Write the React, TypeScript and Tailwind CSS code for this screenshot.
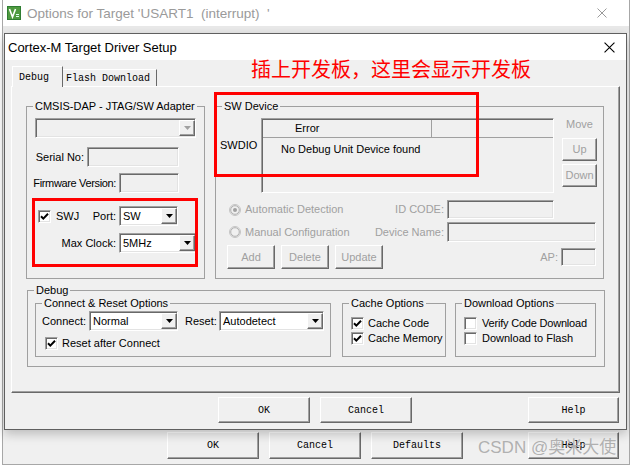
import type { ReactNode } from 'react'

const sunken =
  'border border-t-[#a0a0a0] border-l-[#a0a0a0] border-b-white border-r-white shadow-[inset_1px_1px_0_#696969,inset_-1px_-1px_0_#e3e3e3]'
const raised =
  'border border-t-white border-l-white border-b-[#696969] border-r-[#696969] shadow-[inset_-1px_-1px_0_#a0a0a0]'
const mono = "font-['Liberation_Mono',monospace] text-[10px] text-black"

function Btn({ children, className = '', disabled }: { children: ReactNode; className?: string; disabled?: boolean }) {
  return (
    <div
      className={`flex items-center justify-center bg-[#f0f0f0] ${raised} ${disabled ? 'text-[#a0a0a0]' : ''} ${className}`}
    >
      {children}
    </div>
  )
}

function Arrow({ disabled }: { disabled?: boolean }) {
  return (
    <div className={`ml-auto w-[16px] h-[16px] flex items-center justify-center bg-[#f0f0f0] ${raised}`}>
      <svg width="7" height="4" viewBox="0 0 7 4">
        <path d="M0 0H7L3.5 4Z" fill={disabled ? '#a0a0a0' : '#000'} />
      </svg>
    </div>
  )
}

function Combo({ value, className = '', disabled }: { value?: string; className?: string; disabled?: boolean }) {
  return (
    <div className={`h-[20px] flex items-center ${disabled ? 'bg-[#f0f0f0]' : 'bg-white'} ${sunken} ${className}`}>
      <span className="pl-[3px]">{value}</span>
      <Arrow disabled={disabled} />
    </div>
  )
}

function Field({ className = '' }: { className?: string }) {
  return <div className={`bg-[#f0f0f0] ${sunken} ${className}`} />
}

function Check({ checked, className = '' }: { checked?: boolean; className?: string }) {
  return (
    <div className={`w-[13px] h-[13px] shrink-0 bg-white flex items-center justify-center ${sunken} ${className}`}>
      {checked && (
        <svg width="9" height="9" viewBox="0 0 9 9">
          <path d="M1 4.3L3.3 6.6L8 1.8" stroke="#000" strokeWidth="2" fill="none" />
        </svg>
      )}
    </div>
  )
}

function Radio({ checked, className = '' }: { checked?: boolean; className?: string }) {
  return (
    <svg width="12" height="12" viewBox="0 0 12 12" className={className}>
      <circle cx="6" cy="6" r="5.5" fill="#f0f0f0" stroke="#c4c4c4" />
      <circle cx="6" cy="6" r="4.3" fill="#f0f0f0" stroke="#a0a0a0" strokeWidth="0.8" />
      {checked && <circle cx="6" cy="6" r="2" fill="#a0a0a0" />}
    </svg>
  )
}

function Group({ title, className = '', children }: { title: string; className?: string; children?: ReactNode }) {
  return (
    <fieldset className={`border border-[#a0a0a0] ${className}`}>
      <legend className="ml-[6px] px-[2px] leading-[13px]">{title}</legend>
      {children}
    </fieldset>
  )
}

function XIcon({ color, size, className = '' }: { color: string; size: number; className?: string }) {
  return (
    <svg width={size} height={size} viewBox="0 0 10 10" className={className}>
      <path d="M0.5 0.5L9.5 9.5M9.5 0.5L0.5 9.5" stroke={color} strokeWidth="1" />
    </svg>
  )
}

function KeilIcon() {
  return (
    <svg width="14" height="14" viewBox="0 0 14 14">
      <rect x="0" y="0" width="14" height="14" fill="#2f7d32" />
      <rect x="1" y="1" width="12" height="12" fill="#4f9a3f" />
      <path d="M2.5 3L5.5 11L8.5 3" stroke="#fff" strokeWidth="1.6" fill="none" />
      <path d="M9 8.5H12M9 10.5H12" stroke="#dfe" strokeWidth="1" />
    </svg>
  )
}

export default function App() {
  return (
    <div className="relative w-[630px] h-[467px] overflow-hidden bg-white text-[11px] leading-[13px] text-black font-['Liberation_Sans',Arial,sans-serif]">
      {/* background window */}
      <div className="ml-[2px] w-[628px] h-[465px] flex flex-col border-x border-b border-[#a7a7a7] bg-[#f0f0f0]">
        <div className="h-[26px] shrink-0 bg-white flex items-center pl-[4px] pr-[22px]">
          <KeilIcon />
          <span className="ml-[6px] text-[13.5px] text-[#9a9a9a] whitespace-pre">
            {"Options for Target 'USART1  (interrupt)  '"}
          </span>
          <XIcon color="#9a9a9a" size={10} className="ml-auto" />
        </div>
        <div className="h-[7px] shrink-0 bg-[#e9e9e9]" />
        <div className="flex-1" />
        <div className={`flex pl-[164px] pb-[5px] ${mono}`}>
          <Btn className="w-[92px] h-[27px]">OK</Btn>
          <Btn className="w-[92px] h-[27px] ml-[10px]">Cancel</Btn>
          <Btn className="w-[92px] h-[27px] ml-[10px]">Defaults</Btn>
          <Btn className="w-[91px] h-[27px] ml-[65px]">Help</Btn>
        </div>
      </div>

      {/* driver setup dialog */}
      <div className="absolute left-[4px] top-[33px] w-[623px] h-[397px] flex flex-col border border-[#5f5f5f] bg-[#f0f0f0] shadow-[0_4px_10px_rgba(0,0,0,0.22)]">
        <div className="h-[26px] shrink-0 bg-white flex items-center pl-[3px] pr-[11px]">
          <span className="text-[13px]">Cortex-M Target Driver Setup</span>
          <XIcon color="#000" size={11} className="ml-auto" />
        </div>
        <div className="pt-[6px] pl-[6px]">
          <div className={`flex items-end h-[20px] pl-[1px] ${mono}`}>
            <div className="relative z-10 w-[51px] h-[21px] -mb-[1px] pl-[6px] pt-[4px] bg-[#f0f0f0] border-t border-l border-white border-r border-r-[#696969]">
              Debug
            </div>
            <div className="w-[94px] h-[17px] pl-[3px] pt-[2px] border-t border-white border-r border-r-[#696969]">
              Flash Download
            </div>
          </div>
          <div className={`w-[609px] h-[307px] ${raised}`}>
            <div className="flex pl-[14px] pt-[13px] gap-[10px]">
              <Group title="CMSIS-DAP - JTAG/SW Adapter" className="w-[179px] h-[179px]">
                <Combo disabled className="ml-[8px] mt-[5px] w-[161px]" />
                <div className="flex items-center mt-[9px]">
                  <span className="w-[57px] text-right">Serial No:</span>
                  <Field className="ml-[3px] w-[92px] h-[20px]" />
                </div>
                <div className="flex items-center mt-[6px]">
                  <span className="w-[89px] text-right whitespace-nowrap tracking-[-0.35px]">Firmware Version:</span>
                  <Field className="ml-[3px] w-[60px] h-[20px]" />
                </div>
                <div className="flex items-center mt-[13px]">
                  <div className="w-[89px] flex items-center">
                    <Check checked className="ml-[11px]" />
                    <span className="ml-[5px]">SWJ</span>
                    <span className="ml-auto">Port:</span>
                  </div>
                  <Combo value="SW" className="ml-[3px] w-[59px]" />
                </div>
                <div className="flex items-center mt-[7px]">
                  <span className="w-[89px] text-right">Max Clock:</span>
                  <Combo value="5MHz" className="ml-[3px] w-[77px]" />
                </div>
              </Group>

              <Group title="SW Device" className="w-[389px] h-[179px]">
                <div className="flex mt-[5px]">
                  <span className="w-[45px] pl-[4px] pt-[21px]">SWDIO</span>
                  <div className="w-[293px] h-[75px] border border-t-[#a0a0a0] border-l-[#a0a0a0] border-b-white border-r-white shadow-[inset_1px_1px_0_#696969]">
                    <div className="flex h-[18px] ml-[1px] mt-[1px] border-b border-[#a0a0a0]">
                      <div className="w-[169px] pl-[32px] leading-[17px] border-r border-[#a0a0a0]">Error</div>
                    </div>
                    <div className="pl-[19px] pt-[5px]">No Debug Unit Device found</div>
                  </div>
                  <div className="ml-[8px] w-[35px] flex flex-col text-[#a0a0a0]">
                    <span className="text-center">Move</span>
                    <Btn disabled className="mt-[7px] h-[23px]">Up</Btn>
                    <Btn disabled className="mt-[3px] h-[23px]">Down</Btn>
                  </div>
                </div>
                <div className="text-[#a0a0a0]">
                  <div className="flex items-center h-[19px] mt-[7px]">
                    <div className="w-[228px] flex items-center">
                      <Radio checked className="ml-[13px]" />
                      <span className="ml-[4px]">Automatic Detection</span>
                      <span className="ml-auto">ID CODE:</span>
                    </div>
                    <Field className="ml-[3px] w-[107px] h-[19px]" />
                  </div>
                  <div className="flex items-center h-[20px] mt-[3px]">
                    <div className="w-[228px] flex items-center">
                      <Radio className="ml-[13px]" />
                      <span className="ml-[4px]">Manual Configuration</span>
                      <span className="ml-auto">Device Name:</span>
                    </div>
                    <Field className="ml-[3px] w-[149px] h-[20px]" />
                  </div>
                  <div className="flex items-center h-[24px] mt-[3px]">
                    <div className="w-[342px] flex items-center">
                      <Btn disabled className="ml-[11px] w-[48px] h-[24px]">Add</Btn>
                      <Btn disabled className="ml-[6px] w-[48px] h-[24px]">Delete</Btn>
                      <Btn disabled className="ml-[6px] w-[48px] h-[24px]">Update</Btn>
                      <span className="ml-auto">AP:</span>
                    </div>
                    <Field className="ml-[3px] w-[35px] h-[18px]" />
                  </div>
                </div>
              </Group>
            </div>

            <Group title="Debug" className="ml-[15px] mt-[5px] w-[578px] h-[83px]">
              <div className="flex ml-[7px]">
                <Group title="Connect & Reset Options" className="w-[296px] h-[60px]">
                  <div className="flex items-center mt-[1px]">
                    <span className="w-[50px] pl-[6px]">Connect:</span>
                    <Combo value="Normal" className="ml-[3px] w-[89px]" />
                    <span className="w-[38px] pl-[7px]">Reset:</span>
                    <Combo value="Autodetect" className="ml-[3px] w-[105px]" />
                  </div>
                  <div className="flex items-center mt-[6px]">
                    <Check checked className="ml-[9px]" />
                    <span className="ml-[4px]">Reset after Connect</span>
                  </div>
                </Group>
                <Group title="Cache Options" className="ml-[11px] w-[104px] h-[60px]">
                  <div className="flex flex-col gap-[2px] mt-[7px] ml-[8px]">
                    <div className="flex items-center">
                      <Check checked />
                      <span className="ml-[4px]">Cache Code</span>
                    </div>
                    <div className="flex items-center">
                      <Check checked />
                      <span className="ml-[4px]">Cache Memory</span>
                    </div>
                  </div>
                </Group>
                <Group title="Download Options" className="ml-[9px] w-[141px] h-[60px]">
                  <div className="flex flex-col gap-[2px] mt-[7px] ml-[8px]">
                    <div className="flex items-center">
                      <Check />
                      <span className="ml-[5px] tracking-[-0.2px]">Verify Code Download</span>
                    </div>
                    <div className="flex items-center">
                      <Check />
                      <span className="ml-[5px]">Download to Flash</span>
                    </div>
                  </div>
                </Group>
              </div>
            </Group>
          </div>
          <div className={`flex mt-[4px] ml-[207px] ${mono}`}>
            <Btn className="w-[92px] h-[26px]">OK</Btn>
            <Btn className="w-[92px] h-[26px] ml-[10px]">Cancel</Btn>
            <Btn className="w-[91px] h-[26px] ml-[116px]">Help</Btn>
          </div>
        </div>
      </div>

      {/* annotations */}
      <div className="absolute left-[251px] top-[57px] text-[20px] leading-[24px] text-[#ff0000] font-['Noto_Sans_CJK_SC',sans-serif]">
        插上开发板，这里会显示开发板
      </div>
      <div className="absolute left-[214px] top-[92px] w-[265px] h-[85px] border-[3px] border-[#ff0000]" />
      <div className="absolute left-[32px] top-[198px] w-[166px] h-[69px] border-[3px] border-[#ff0000]" />
      <div className="absolute left-[478px] top-[437px] text-[17px] leading-[22px] text-[#a8a8a8]/90 whitespace-pre font-['Liberation_Sans','Noto_Sans_CJK_SC',sans-serif]">
        CSDN @奥米大使
      </div>
    </div>
  )
}
